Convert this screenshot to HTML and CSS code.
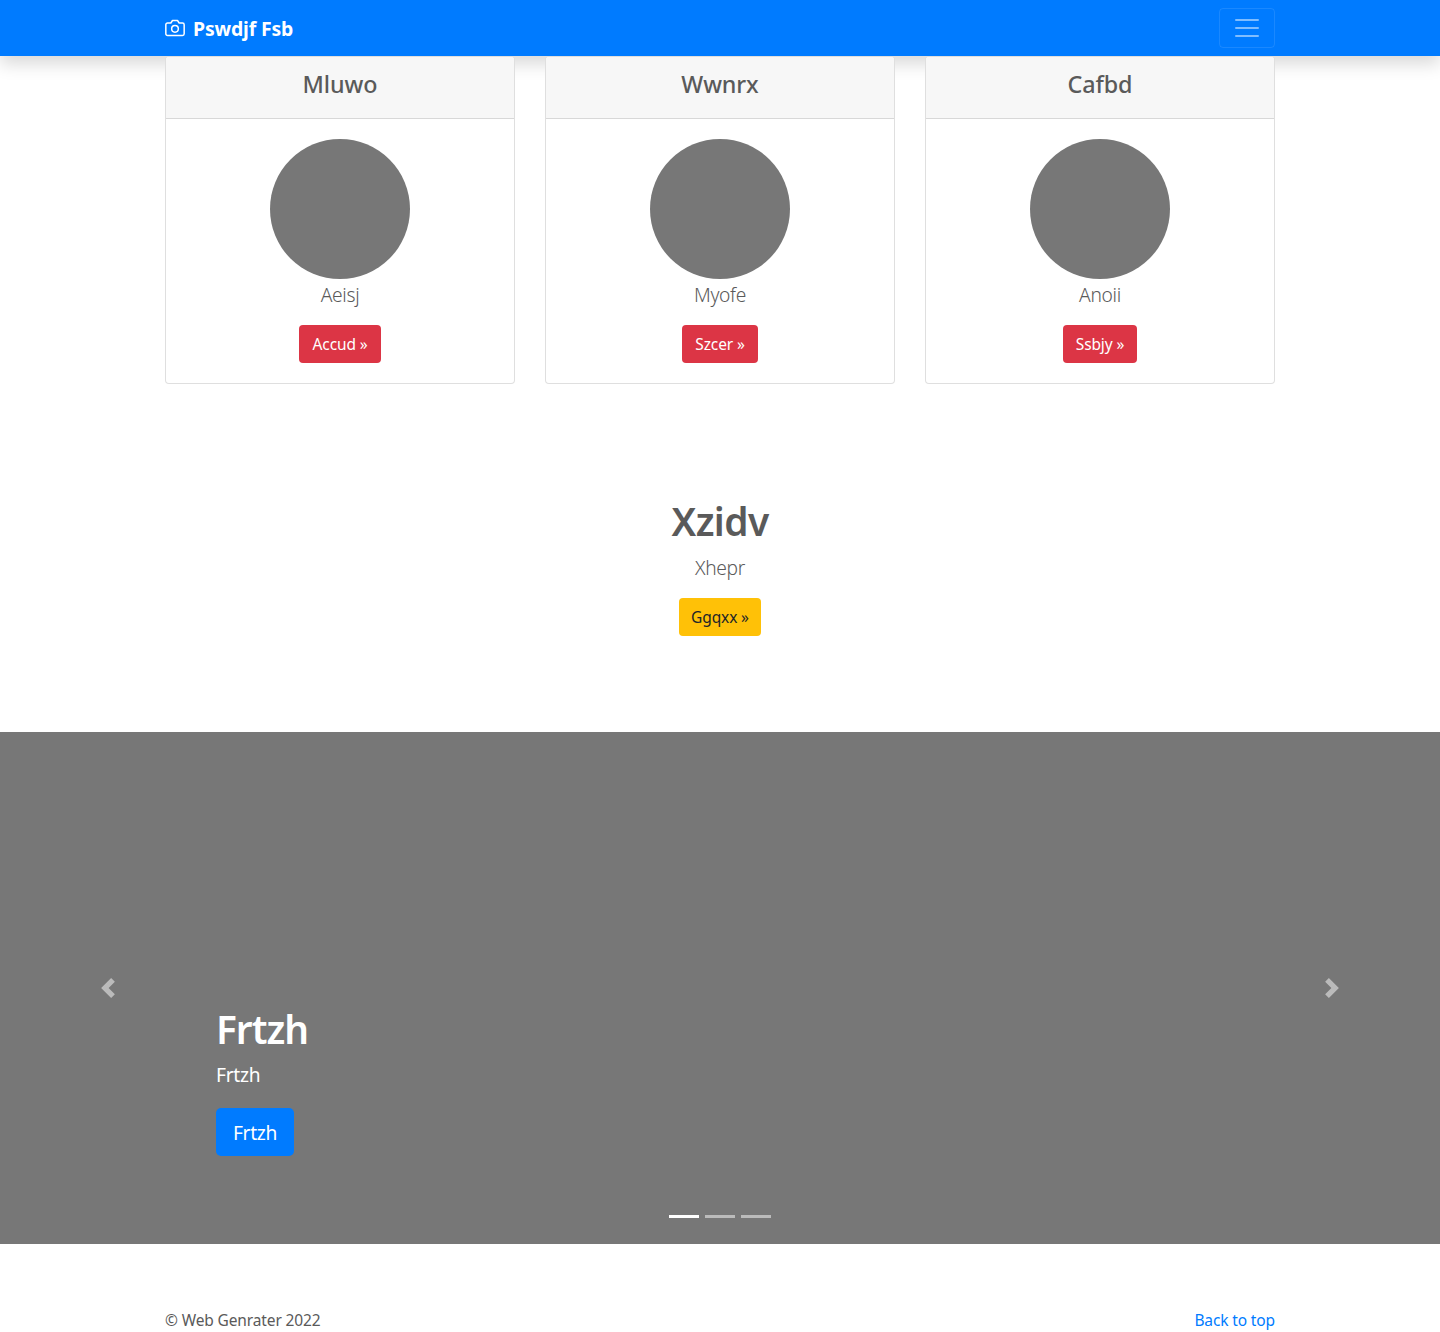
FILE: index.html
```html
<!DOCTYPE html>
<html lang="en">
<head>
<meta charset="utf-8">
<title>Pswdjf Fsb</title>
<link rel="stylesheet" href="styles.css">
</head>
<body>
<header class="navbar">
  <div class="container navbar-row">
    <a class="brand" href="#">
      <svg width="20" height="20" viewBox="0 0 24 24" fill="none" stroke="currentColor" stroke-width="1.8" stroke-linecap="round" stroke-linejoin="round"><path d="M23 19a2 2 0 0 1-2 2H3a2 2 0 0 1-2-2V8a2 2 0 0 1 2-2h4l2-3h6l2 3h4a2 2 0 0 1 2 2z"/><circle cx="12" cy="13" r="4"/></svg>
      <strong class="brand-name">Pswdjf Fsb</strong>
    </a>
    <button class="toggler" type="button" aria-label="Toggle navigation">
      <svg width="30" height="30" viewBox="0 0 30 30" stroke="rgba(255,255,255,.5)" stroke-width="2" stroke-linecap="round" stroke-miterlimit="10"><path d="M4 7h22M4 15h22M4 23h22"/></svg>
    </button>
  </div>
</header>
<main>
  <section class="container cards">
    <article class="card">
      <div class="card-header"><h2 class="card-title">Mluwo</h2></div>
      <div class="card-body"><div class="avatar"></div><p class="lead">Aeisj</p><a class="btn btn-danger w-accud" href="#">Accud »</a></div>
    </article>
    <article class="card">
      <div class="card-header"><h2 class="card-title">Wwnrx</h2></div>
      <div class="card-body"><div class="avatar"></div><p class="lead">Myofe</p><a class="btn btn-danger w-szcer" href="#">Szcer »</a></div>
    </article>
    <article class="card">
      <div class="card-header"><h2 class="card-title">Cafbd</h2></div>
      <div class="card-body"><div class="avatar"></div><p class="lead">Anoii</p><a class="btn btn-danger w-ssbjy" href="#">Ssbjy »</a></div>
    </article>
  </section>
  <section class="intro">
    <h1 class="heading">Xzidv</h1>
    <p class="lead">Xhepr</p>
    <a class="btn btn-warning" href="#">Ggqxx »</a>
  </section>
  <section class="carousel">
    <a class="control" href="#" aria-label="Previous"><svg width="20" height="20" viewBox="0 0 8 8" fill="#fff"><path d="M5.25 0l-4 4 4 4 1.5-1.5L4.25 4l2.5-2.5L5.25 0z"/></svg></a>
    <div class="caption">
      <h1 class="heading caption-heading">Frtzh</h1>
      <p class="caption-text">Frtzh</p>
      <a class="btn btn-primary" href="#">Frtzh</a>
    </div>
    <a class="control" href="#" aria-label="Next"><svg width="20" height="20" viewBox="0 0 8 8" fill="#fff"><path d="M2.75 0l-1.5 1.5L3.75 4l-2.5 2.5L2.75 8l4-4-4-4z"/></svg></a>
    <div class="indicators"><i class="dot active"></i><i class="dot"></i><i class="dot"></i></div>
  </section>
</main>
<footer class="container footer">
  <span class="copyright">© Web Genrater 2022</span>
  <a class="top-link" href="#">Back to top</a>
</footer>
</body>
</html>
```
FILE: styles.css
```css
* { box-sizing: border-box; }
body {
  margin: 0;
  height: 1332px;
  overflow: hidden;
  font: 15.5px/24px "Noto Sans", "Open Sans", sans-serif;
  letter-spacing: -0.13px;
  color: #5a5a5a;
  background: #fff;
}
a { color: #007bff; text-decoration: none; }
h1, h2, p { margin: 0; }
svg { display: block; }
.container { width: 1110px; margin: 0 auto; }

.navbar { height: 56px; background: #007bff; box-shadow: 0 8px 16px rgba(0, 0, 0, .15); }
.navbar-row { height: 56px; display: flex; align-items: center; justify-content: space-between; }
.brand { display: flex; align-items: center; gap: 8px; color: #fff; }
.brand-name { padding-top: 2px; font-size: 19.4px; line-height: 30px; letter-spacing: -0.15px; }
.toggler {
  width: 56px;
  height: 40px;
  padding: 0 12px;
  border: 1px solid rgba(255, 255, 255, .1);
  border-radius: 4px;
  background: transparent;
}

.cards { position: relative; display: grid; grid-template-columns: repeat(3, 1fr); gap: 30px; }
.card {
  height: 328px;
  text-align: center;
  background: #fff;
  border: 1px solid rgba(0, 0, 0, .125);
  border-radius: 4px;
}
.card-header {
  height: 62px;
  padding-top: 13px;
  background: #f7f7f7;
  border-bottom: 1px solid rgba(0, 0, 0, .125);
  border-radius: 3px 3px 0 0;
}
.card-title { font-size: 23.3px; font-weight: 500; line-height: 29px; letter-spacing: -0.1px; }
.card-body { padding: 20px; display: flex; flex-direction: column; align-items: center; }
.avatar { width: 140px; height: 140px; border-radius: 50%; background: #777; }
.lead { padding-top: 1px; margin-bottom: 15px; font-size: 19.2px; font-weight: 300; line-height: 30px; letter-spacing: -0.3px; }

.btn { display: flex; align-items: center; justify-content: center; height: 38px; border-radius: 4px; white-space: nowrap; }
.btn-danger { color: #fff; background: #dc3545; }
.w-accud { width: 82px; }
.w-szcer { width: 76px; }
.w-ssbjy { width: 74px; }
.btn-warning { width: 82px; color: #212529; background: #ffc107; }
.btn-primary { width: 78px; height: 48px; padding-top: 2px; color: #fff; background: #007bff; font-size: 19.2px; letter-spacing: -0.3px; border-radius: 5px; }

.heading { padding-top: 1px; margin-bottom: 7px; font-size: 38.8px; font-weight: 600; line-height: 48px; letter-spacing: -0.6px; }
.caption-heading { letter-spacing: -1px; }
.intro { height: 348px; padding-top: 112px; display: flex; flex-direction: column; align-items: center; }

.carousel { position: relative; height: 512px; display: flex; background: #777; color: #fff; }
.control { width: 216px; display: flex; align-items: center; justify-content: center; opacity: .5; }
.caption { flex: 1; padding-top: 272px; }
.caption-text { margin-bottom: 18px; font-size: 19.2px; line-height: 30px; letter-spacing: -0.3px; }
.indicators { position: absolute; left: 0; right: 0; bottom: 26px; display: flex; justify-content: center; gap: 6px; }
.dot { width: 30px; height: 3px; background: #fff; opacity: .5; }
.dot.active { opacity: 1; }

.footer { padding-top: 64px; display: flex; justify-content: space-between; }
```
